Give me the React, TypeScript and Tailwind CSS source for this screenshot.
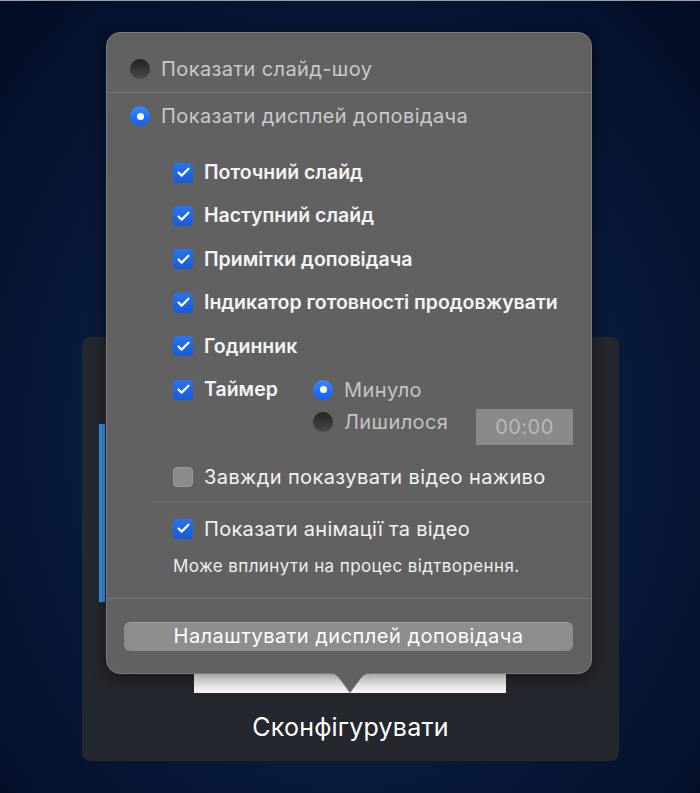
import { Check } from "lucide-react";

const font = { fontFamily: "Inter, 'Noto Sans', sans-serif" };

function Radio({ on }: { on?: boolean }) {
  if (on) {
    return (
      <span className="flex items-center justify-center w-[20px] h-[20px] rounded-full bg-gradient-to-b from-[#3b86ff] to-[#0a60ff] shrink-0">
        <span className="w-[7px] h-[7px] rounded-full bg-white" />
      </span>
    );
  }
  return (
    <span className="w-[20px] h-[20px] rounded-full bg-gradient-to-b from-[#232323] to-[#4a4a4a] shrink-0" />
  );
}

function Checkbox({ on }: { on?: boolean }) {
  if (on) {
    return (
      <span className="flex items-center justify-center w-[20px] h-[20px] rounded-[4px] bg-gradient-to-b from-[#2a74ee] to-[#175ad8] shrink-0">
        <Check className="w-[15px] h-[15px] text-white" strokeWidth={3.5} />
      </span>
    );
  }
  return (
    <span className="w-[20px] h-[20px] rounded-[4px] bg-[#8b8b8b] border border-[#9a9a9a] shrink-0" />
  );
}

function CheckRow({ label }: { label: string }) {
  return (
    <div className="flex items-center h-[43.4px] gap-[11px]">
      <Checkbox on />
      <span className="text-[19.5px] font-semibold text-[#f4f4f4]">{label}</span>
    </div>
  );
}

export default function App() {
  return (
    <div
      className="relative w-[700px] h-[793px] overflow-hidden border-t border-[#9aa0a8] bg-[radial-gradient(ellipse_at_50%_55%,#112b55_0%,#0a1b3d_50%,#020d25_100%)]"
      style={font}
    >
      {/* Configure panel behind the popover */}
      <div className="mt-[336px] ml-[82px] w-[537px] h-[424px] rounded-[8px] bg-[#25272e] flex flex-col">
        <div className="ml-[17px] mt-[87px] w-[6px] h-[178px] bg-[#3a8ee6]" />
        <div className="ml-[112px] mt-[5px] w-[312px] h-[86px] bg-gradient-to-b from-[#e4e4e4] to-[#f6f6f6]" />
        <div className="mt-[19px] text-center text-[25px] leading-[30px] tracking-[0.2px] text-white">
          Сконфігурувати
        </div>
      </div>

      {/* Popover */}
      <div className="absolute left-[106px] top-[31px] w-[486px] h-[642px] rounded-[14px] bg-[#616161] border border-[#7b7b7b] shadow-[0_4px_16px_rgba(0,0,0,0.45)] flex flex-col">
        <div className="pt-[24px] pl-[23px] h-[59px]">
          <div className="flex items-center h-[24px] gap-[11px]">
            <Radio />
            <span className="text-[20px] tracking-[0.4px] text-[#c9c9c9]">Показати слайд-шоу</span>
          </div>
        </div>
        <div className="h-px bg-[#747474]" />
        <div className="pl-[23px] mt-[11px] flex items-center h-[24px] gap-[11px]">
          <Radio on />
          <span className="text-[20px] tracking-[0.4px] text-[#c9c9c9]">Показати дисплей доповідача</span>
        </div>

        <div className="pl-[66px] mt-[23px] flex flex-col">
          <CheckRow label="Поточний слайд" />
          <CheckRow label="Наступний слайд" />
          <CheckRow label="Примітки доповідача" />
          <CheckRow label="Індикатор готовності продовжувати" />
          <CheckRow label="Годинник" />

          <div className="flex">
            <div className="w-[140px] pt-[9.7px]">
              <div className="flex items-center h-[24px] gap-[11px]">
                <Checkbox on />
                <span className="text-[19.5px] font-semibold text-[#f4f4f4]">Таймер</span>
              </div>
            </div>
            <div className="pt-[9.7px] flex flex-col gap-[8px]">
              <div className="flex items-center h-[24px] gap-[11px]">
                <Radio on />
                <span className="text-[20px] tracking-[0.4px] text-[#c4c4c4]">Минуло</span>
              </div>
              <div className="flex items-start">
                <div className="flex items-center h-[24px] gap-[11px]">
                  <Radio />
                  <span className="w-[132px] text-[20px] tracking-[0.4px] text-[#c4c4c4]">Лишилося</span>
                </div>
                <div className="-mt-[1px] w-[97px] h-[36px] bg-[#8a8a8a] flex items-center justify-center text-[20px] tracking-[0.5px] text-[#b8b8b8]">
                  00:00
                </div>
              </div>
            </div>
          </div>

          <div className="mt-[20px] flex items-center h-[24px] gap-[11px]">
            <Checkbox />
            <span className="text-[20px] tracking-[0.4px] text-[#f2f2f2]">Завжди показувати відео наживо</span>
          </div>
        </div>

        <div className="mt-[12px] ml-[46px] h-px bg-[#747474]" />

        <div className="pl-[66px] mt-[15px] flex items-center h-[24px] gap-[11px]">
          <Checkbox on />
          <span className="text-[20px] tracking-[0.3px] text-[#f2f2f2]">Показати анімації та відео</span>
        </div>
        <div className="pl-[66px] mt-[15px] h-[20px] leading-[20px] text-[17px] tracking-[0.4px] text-[#eeeeee]">
          Може вплинути на процес відтворення.
        </div>

        <div className="mt-[22px] h-px bg-[#747474]" />

        <button
          type="button"
          className="mt-[23px] ml-[17px] w-[449px] h-[29px] rounded-[6px] bg-[#8d8d8d] border-t border-[#9c9c9c] text-[20px] tracking-[0.5px] text-white text-center leading-[27px]"
        >
          Налаштувати дисплей доповідача
        </button>

        {/* arrow */}
        <svg
          className="absolute left-[219px] top-full -mt-[1.5px]"
          width="48"
          height="22"
          viewBox="0 0 48 22"
        >
          <path
            d="M0 1 C8 1 10 2 14 7 L24 20.5 L34 7 C38 2 40 1 48 1 Z"
            fill="#616161"
          />
          <path
            d="M0 1 C8 1 10 2 14 7 L24 20.5 L34 7 C38 2 40 1 48 1"
            fill="none"
            stroke="#7b7b7b"
            strokeWidth="1"
          />
          <rect x="1" y="0" width="46" height="1.2" fill="#616161" />
        </svg>
      </div>
    </div>
  );
}
